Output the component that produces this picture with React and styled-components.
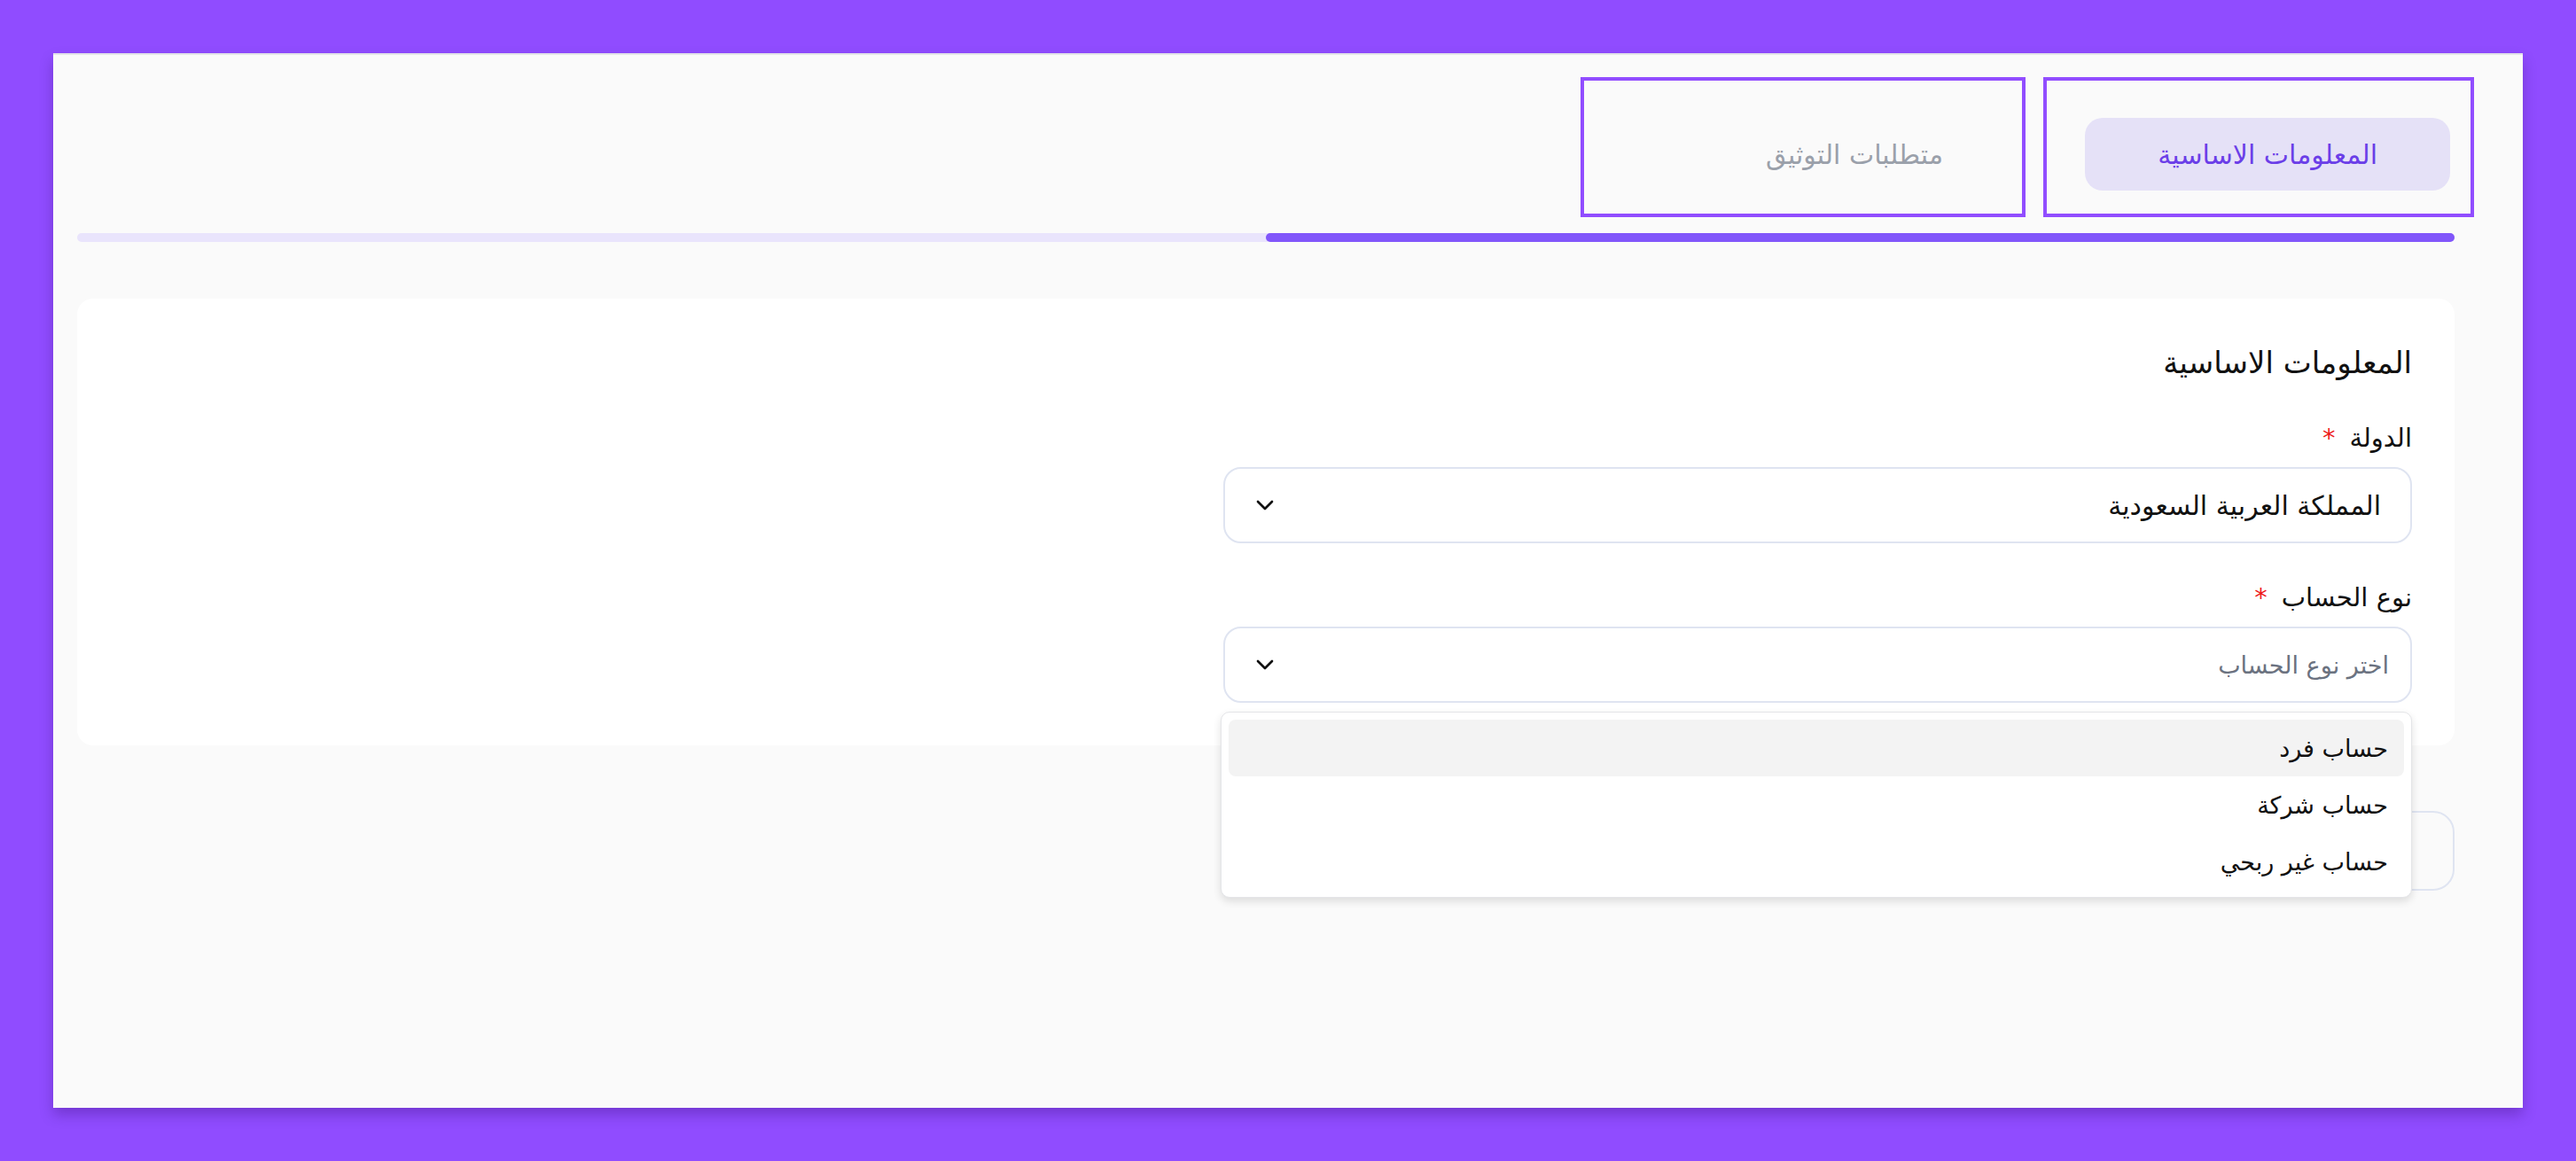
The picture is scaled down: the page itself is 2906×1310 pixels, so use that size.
import React from "react";
import styled, { createGlobalStyle } from "styled-components";
import { ChevronDown } from "lucide-react";

const GlobalStyle = createGlobalStyle`
  * {
    box-sizing: border-box;
  }
  body {
    margin: 0;
    background: #904cff;
    font-family: "DejaVu Sans", "Noto Sans", sans-serif;
    color: #111;
  }
`;

const Page = styled.div`
  padding: 60px;
  width: 2906px;
  height: 1310px;
`;

const Panel = styled.div`
  direction: rtl;
  height: 1190px;
  background: #fafafa;
  border-top: 2px solid #e3e4e8;
  box-shadow: 0 8px 14px rgba(40, 0, 90, 0.28);
  padding: 25px 77px 0 27px;
  display: flex;
  flex-direction: column;
`;

const Tabs = styled.div`
  display: flex;
  gap: 20px;
  margin-right: -22px;
`;

const Tab = styled.div`
  width: ${(p) => p.$width}px;
  height: 158px;
  border: 4px solid #914dff;
  display: flex;
  align-items: center;
  padding: 16px 23px 0 0;
`;

const Pill = styled.div`
  height: 82px;
  display: flex;
  align-items: center;
  padding: 0 ${(p) => (p.$active ? 82 : 66)}px;
  border-radius: 20px;
  font-size: 30px;
  background: ${(p) => (p.$active ? "#e5e1f7" : "transparent")};
  color: ${(p) => (p.$active ? "#6b3ee8" : "#9aa0aa")};
`;

const Progress = styled.div`
  margin-top: 18px;
  height: 10px;
  border-radius: 5px;
  background: #e9e4fc;
  display: flex;
`;

const ProgressFill = styled.div`
  height: 100%;
  border-radius: 5px;
  background: #8156fa;
`;

const Card = styled.div`
  margin-top: 64px;
  background: #fff;
  border-radius: 18px;
  padding: 48px;
`;

const Form = styled.div`
  width: 1341px;
  display: flex;
  flex-direction: column;
  gap: 43px;
`;

const Title = styled.h2`
  margin: 0;
  font-size: 34px;
  line-height: 48px;
  font-weight: 400;
  color: #111;
`;

const Field = styled.div`
  position: relative;
  display: flex;
  flex-direction: column;
  gap: 15px;
`;

const Label = styled.label`
  font-size: 29px;
  line-height: 36px;
  font-weight: 500;
  color: #111;
  display: flex;
  gap: 16px;
`;

const Required = styled.span`
  color: #ee1b1b;
`;

const Select = styled.div`
  height: 86px;
  border: 2px solid #dfe4f1;
  border-radius: 20px;
  background: #fff;
  display: flex;
  align-items: center;
  justify-content: space-between;
  padding: 0 ${(p) => p.$inset}px 0 29px;
  font-size: ${(p) => (p.$placeholder ? 27 : 30)}px;
  color: ${(p) => (p.$placeholder ? "#6b7280" : "#111")};
`;

const Chevron = styled(ChevronDown)`
  color: #111;
  flex-shrink: 0;
`;

const Menu = styled.ul`
  position: absolute;
  top: calc(100% + 10px);
  right: 0;
  left: -3px;
  z-index: 10;
  margin: 0;
  padding: 8px;
  list-style: none;
  background: #fff;
  border: 1px solid #e4e5e8;
  border-radius: 10px;
  box-shadow: 0 4px 10px rgba(0, 0, 0, 0.12);
`;

const MenuItem = styled.li`
  height: 64px;
  display: flex;
  align-items: center;
  padding: 0 18px;
  border-radius: 8px;
  font-size: 27px;
  color: #111;
  background: ${(p) => (p.$highlighted ? "#f3f3f3" : "transparent")};
`;

const Actions = styled.div`
  margin-top: 74px;
  display: flex;
`;

const Button = styled.button`
  width: 300px;
  height: 90px;
  border: 2px solid #dfe4f1;
  border-radius: 24px;
  background: transparent;
`;

const accountTypes = ["حساب فرد", "حساب شركة", "حساب غير ربحي"];

export default function App() {
  return (
    <>
      <GlobalStyle />
      <Page>
        <Panel>
          <Tabs>
            <Tab $width={486}>
              <Pill $active>المعلومات الاساسية</Pill>
            </Tab>
            <Tab $width={502}>
              <Pill>متطلبات التوثيق</Pill>
            </Tab>
          </Tabs>
          <Progress>
            <ProgressFill style={{ width: "50%" }} />
          </Progress>
          <Card>
            <Form>
              <Title>المعلومات الاساسية</Title>
              <Field>
                <Label>
                  الدولة <Required>*</Required>
                </Label>
                <Select $inset={33}>
                  <span>المملكة العربية السعودية</span>
                  <Chevron size={32} strokeWidth={2} />
                </Select>
              </Field>
              <Field>
                <Label>
                  نوع الحساب <Required>*</Required>
                </Label>
                <Select $inset={24} $placeholder>
                  <span>اختر نوع الحساب</span>
                  <Chevron size={32} strokeWidth={2} />
                </Select>
                <Menu>
                  {accountTypes.map((t, i) => (
                    <MenuItem key={t} $highlighted={i === 0}>
                      {t}
                    </MenuItem>
                  ))}
                </Menu>
              </Field>
            </Form>
          </Card>
          <Actions>
            <Button aria-label="التالي" />
          </Actions>
        </Panel>
      </Page>
    </>
  );
}
